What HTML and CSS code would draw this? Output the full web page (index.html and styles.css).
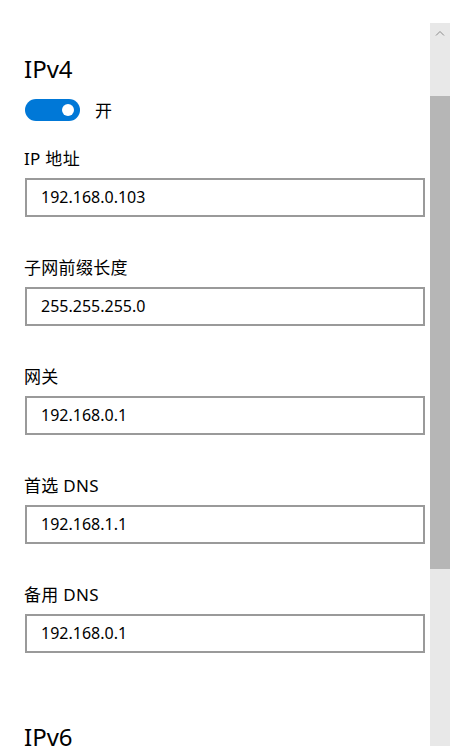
FILE: index.html
```html
<!DOCTYPE html>
<html lang="zh-CN">
<head>
<meta charset="utf-8">
<link rel="stylesheet" href="styles.css">
</head>
<body>
<div class="page">
  <div class="content">
    <h2 class="section-title">IPv4</h2>
    <div class="toggle-row">
      <span class="toggle"><span class="knob"></span></span>
      <span class="toggle-label">开</span>
    </div>
    <div class="field">
      <div class="field-label">IP 地址</div>
      <div class="input">192.168.0.103</div>
    </div>
    <div class="field">
      <div class="field-label">子网前缀长度</div>
      <div class="input">255.255.255.0</div>
    </div>
    <div class="field">
      <div class="field-label">网关</div>
      <div class="input">192.168.0.1</div>
    </div>
    <div class="field">
      <div class="field-label">首选 DNS</div>
      <div class="input">192.168.1.1</div>
    </div>
    <div class="field">
      <div class="field-label">备用 DNS</div>
      <div class="input">192.168.0.1</div>
    </div>
    <h2 class="section-title section-title-v6">IPv6</h2>
  </div>
  <div class="scrollbar">
    <div class="scroll-arrow">
      <svg width="10" height="6" viewBox="0 0 10 6"><path d="M1 5.5 L5 1.5 L9 5.5" fill="none" stroke="#8a8a8a" stroke-width="1"/></svg>
    </div>
    <div class="scroll-gap"></div>
    <div class="scroll-thumb"></div>
    <div class="scroll-rest"></div>
  </div>
</div>
</body>
</html>
```
FILE: styles.css
```css
html, body {
  margin: 0;
  padding: 0;
  background: #ffffff;
  height: 100%;
  overflow: hidden;
}
body {
  font-family: "Noto Sans", "Noto Sans CJK SC", sans-serif;
  color: #000000;
}
.page {
  display: flex;
  height: 746px;
  overflow: hidden;
}
.content {
  width: 400px;
  padding-left: 25px;
  padding-top: 53px;
  flex: none;
}
.section-title {
  margin: 0 0 0 -1px;
  font-weight: 400;
  font-size: 24px;
  line-height: 32px;
  height: 32px;
}
.section-title-v6 {
  margin-top: 68px;
}
.toggle-row {
  display: flex;
  align-items: center;
  margin-top: 14px;
  height: 22px;
}
.toggle {
  width: 55px;
  height: 22px;
  border-radius: 11px;
  background: #0078d7;
  display: flex;
  align-items: center;
  justify-content: flex-end;
  padding-right: 6px;
  box-sizing: border-box;
}
.knob {
  width: 12px;
  height: 12px;
  border-radius: 50%;
  background: #ffffff;
}
.toggle-label {
  margin-left: 15px;
  font-family: "Noto Sans CJK SC", sans-serif;
  font-size: 17px;
  line-height: 22px;
}
.field {
  margin-top: 26px;
}
.field + .field {
  margin-top: 39px;
}
.field-label {
  font-family: "Noto Sans", "Noto Sans CJK SC", sans-serif;
  font-size: 17px;
  line-height: 24px;
  height: 24px;
  margin-left: -1px;
  letter-spacing: 0.3px;
}
.input {
  margin-top: 7px;
  box-sizing: border-box;
  width: 400px;
  height: 39px;
  border: 2px solid #9a9a9a;
  padding-left: 14px;
  font-size: 16px;
  line-height: 35px;
}
.scrollbar {
  margin-left: 5px;
  margin-top: 23px;
  width: 20px;
  display: flex;
  flex-direction: column;
  background: #e8e8e8;
}
.scroll-arrow {
  height: 20px;
  display: flex;
  align-items: center;
  justify-content: center;
}
.scroll-gap {
  height: 53px;
}
.scroll-thumb {
  height: 473px;
  background: #b6b6b6;
}
.scroll-rest {
  flex: 1;
}
```
